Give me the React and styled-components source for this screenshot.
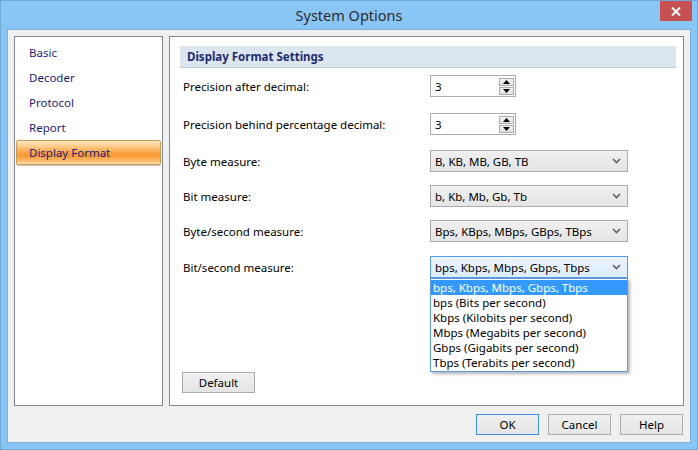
import React from "react";
import styled, { createGlobalStyle } from "styled-components";

const Global = createGlobalStyle`
  html, body { margin: 0; padding: 0; }
  body { width: 698px; height: 450px; overflow: hidden; font-family: "Noto Sans", "Open Sans", sans-serif; font-size: 11.5px; }
  * { box-sizing: border-box; }
`;

const Window = styled.div`
  width: 698px;
  height: 450px;
  background: #8ac6f5;
  border: 1px solid #6ea9da;
  display: flex;
  flex-direction: column;
  padding: 0 6px 6px 6px;
`;

const TitleBar = styled.div`
  height: 29px;
  position: relative;
  display: flex;
  align-items: center;
  justify-content: center;
  font-size: 14.5px;
  color: #2b2b2b;
  padding-bottom: 1px;
`;

const CloseBtn = styled.div`
  position: absolute;
  top: 0;
  right: -1px;
  width: 32px;
  height: 20px;
  background: #c75050;
  display: flex;
  align-items: center;
  justify-content: center;
`;

const Client = styled.div`
  flex: 1;
  background: #f0f0f0;
  border: 1px solid #78b0e0;
  display: flex;
  flex-direction: column;
  padding: 6px 6px 7px 6px;
`;

const Main = styled.div`
  display: flex;
  gap: 6px;
  height: 370px;
`;

const Sidebar = styled.div`
  width: 149px;
  background: #fff;
  border: 1px solid #828790;
  padding: 3px 1px 0 1px;
  display: flex;
  flex-direction: column;
`;

const NavItem = styled.div`
  height: 25px;
  display: flex;
  align-items: center;
  padding-left: 12px;
  color: #1c1c78;
  border: 1px solid ${(p) => (p.$active ? "#c89a5a" : "transparent")};
  border-radius: 2px;
  background: ${(p) =>
    p.$active
      ? "linear-gradient(#fde7c0 0%, #fbc27a 30%, #f8962e 60%, #fbb768 85%, #fde0b0 100%)"
      : "transparent"};
  box-shadow: ${(p) => (p.$active ? "0 1px 1px rgba(120,80,20,0.35)" : "none")};
`;

const Panel = styled.div`
  flex: 1;
  background: #fff;
  border: 1px solid #828790;
  padding: 9px 7px 0 10px;
  display: flex;
  flex-direction: column;
`;

const Header = styled.div`
  height: 22px;
  background: #dce6ee;
  border-bottom: 1px solid #c3ccd4;
  color: #1e2a6e;
  font-weight: bold;
  display: flex;
  align-items: center;
  padding-left: 7px;
`;

const Row = styled.div`
  display: flex;
  align-items: center;
  height: 22px;
  margin-top: ${(p) => p.$mt}px;
  padding-left: 3px;
  position: relative;
`;

const Label = styled.div`
  width: 247px;
  color: #000;
  padding-top: 1px;
`;

const SpinBox = styled.div`
  width: 86px;
  height: 22px;
  border: 1px solid #acacac;
  display: flex;
  align-items: center;
  padding-left: 4px;
  justify-content: space-between;
  padding-right: 1px;
`;

const SpinButtons = styled.div`
  display: flex;
  flex-direction: column;
  gap: 1px;
`;

const SpinBtn = styled.div`
  width: 15px;
  height: 8px;
  border: 1px solid #adadad;
  background: linear-gradient(#f2f2f2, #e2e2e2);
  display: flex;
  align-items: center;
  justify-content: center;
`;

const Select = styled.div`
  width: 198px;
  height: 22px;
  border: 1px solid ${(p) => (p.$focus ? "#569de5" : "#acacac")};
  background: ${(p) => (p.$focus ? "linear-gradient(#ecf4fc, #dcecfc)" : "linear-gradient(#f0f0f0, #e5e5e5)")};
  display: flex;
  align-items: center;
  justify-content: space-between;
  padding: 0 6px 0 4px;
  color: #000;
  position: relative;
`;

const DropList = styled.div`
  position: absolute;
  top: 21px;
  left: -1px;
  width: 198px;
  background: #fff;
  border: 1px solid #5e9bd9;
  box-shadow: 2px 2px 3px rgba(0, 0, 0, 0.3);
  padding: 1px 0 1px 0;
  z-index: 5;
`;

const DropItem = styled.div`
  height: 15px;
  line-height: 15px;
  padding-left: 2px;
  background: ${(p) => (p.$sel ? "#3399ff" : "transparent")};
  color: ${(p) => (p.$sel ? "#fff" : "#000")};
  white-space: nowrap;
  overflow: hidden;
`;

const Spacer = styled.div`
  flex: 1;
`;

const Btn = styled.div`
  width: ${(p) => p.$w || 63}px;
  height: 21px;
  border: 1px solid ${(p) => (p.$primary ? "#3c8fe0" : "#adadad")};
  background: linear-gradient(#f0f0f0, #e5e5e5);
  display: flex;
  align-items: center;
  justify-content: center;
  color: #000;
`;

const DefaultWrap = styled.div`
  padding: 0 0 12px 2px;
`;

const Footer = styled.div`
  display: flex;
  justify-content: flex-end;
  gap: 9px;
  padding-top: 8px;
  padding-right: 1px;
`;

const Chevron = () => (
  <svg width="9" height="6" viewBox="0 0 9 6">
    <path d="M1 1 L4.5 4.5 L8 1" stroke="#606060" strokeWidth="1.6" fill="none" />
  </svg>
);

const Up = () => (
  <svg width="7" height="4" viewBox="0 0 7 4">
    <path d="M0 4 L3.5 0 L7 4 Z" fill="#000" />
  </svg>
);
const Down = () => (
  <svg width="7" height="4" viewBox="0 0 7 4">
    <path d="M0 0 L3.5 4 L7 0 Z" fill="#000" />
  </svg>
);

const Spin = ({ value }) => (
  <SpinBox>
    <span>{value}</span>
    <SpinButtons>
      <SpinBtn><Up /></SpinBtn>
      <SpinBtn><Down /></SpinBtn>
    </SpinButtons>
  </SpinBox>
);

const nav = ["Basic", "Decoder", "Protocol", "Report", "Display Format"];
const listItems = [
  "bps, Kbps, Mbps, Gbps, Tbps",
  "bps (Bits per second)",
  "Kbps (Kilobits per second)",
  "Mbps (Megabits per second)",
  "Gbps (Gigabits per second)",
  "Tbps (Terabits per second)",
];

export default function App() {
  return (
    <>
      <Global />
      <Window>
        <TitleBar>
          System Options
          <CloseBtn>
            <svg width="10" height="9" viewBox="0 0 10 9">
              <path d="M1 0.5 L9 8.5 M9 0.5 L1 8.5" stroke="#fff" strokeWidth="2" />
            </svg>
          </CloseBtn>
        </TitleBar>
        <Client>
          <Main>
            <Sidebar>
              {nav.map((n) => (
                <NavItem key={n} $active={n === "Display Format"}>{n}</NavItem>
              ))}
            </Sidebar>
            <Panel>
              <Header>Display Format Settings</Header>
              <Row $mt={7}>
                <Label>Precision after decimal:</Label>
                <Spin value="3" />
              </Row>
              <Row $mt={16}>
                <Label>Precision behind percentage decimal:</Label>
                <Spin value="3" />
              </Row>
              <Row $mt={15}>
                <Label>Byte measure:</Label>
                <Select>B, KB, MB, GB, TB<Chevron /></Select>
              </Row>
              <Row $mt={13}>
                <Label>Bit measure:</Label>
                <Select>b, Kb, Mb, Gb, Tb<Chevron /></Select>
              </Row>
              <Row $mt={13}>
                <Label>Byte/second measure:</Label>
                <Select>Bps, KBps, MBps, GBps, TBps<Chevron /></Select>
              </Row>
              <Row $mt={14}>
                <Label>Bit/second measure:</Label>
                <Select $focus>
                  bps, Kbps, Mbps, Gbps, Tbps<Chevron />
                  <DropList>
                    {listItems.map((t, i) => (
                      <DropItem key={t} $sel={i === 0}>{t}</DropItem>
                    ))}
                  </DropList>
                </Select>
              </Row>
              <Spacer />
              <DefaultWrap>
                <Btn $w={73}>Default</Btn>
              </DefaultWrap>
            </Panel>
          </Main>
          <Footer>
            <Btn $primary>OK</Btn>
            <Btn>Cancel</Btn>
            <Btn>Help</Btn>
          </Footer>
        </Client>
      </Window>
    </>
  );
}
